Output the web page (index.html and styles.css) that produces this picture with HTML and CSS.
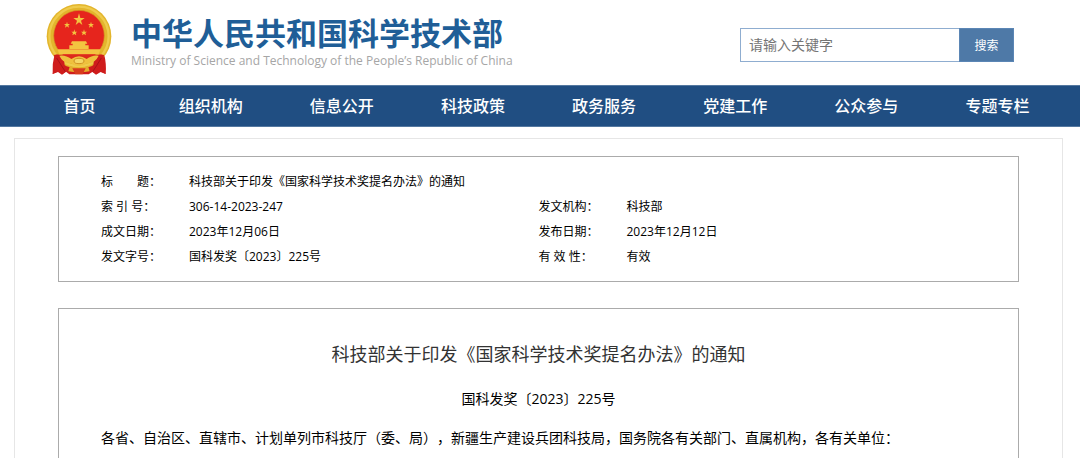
FILE: index.html
```html
<!DOCTYPE html>
<html lang="zh-CN">
<head>
<meta charset="utf-8">
<meta name="viewport" content="width=device-width, initial-scale=1">
<title>科技部关于印发《国家科学技术奖提名办法》的通知</title>
<link rel="stylesheet" href="styles.css">
</head>
<body>
<header class="header">
  <a class="brand" href="#">
    <svg class="emblem" viewBox="18 11 201 219" aria-hidden="true">
      <path d="M44 160 Q36 190 38 221 L54 215 L66 223 L78 214 L88 222 L146 222 L158 214 L168 223 L182 215 L197 221 Q200 190 192 160Z" fill="#cf1c1c"/>
      <circle cx="117" cy="108" r="97" fill="#e3b52c"/>
      <circle cx="117" cy="108" r="89" fill="none" stroke="#efcb4c" stroke-width="7"/>
      <circle cx="117" cy="106" r="76" fill="#e6251d" stroke="#d19b22" stroke-width="2"/>
      <g fill="#f3c440">
        <path d="M117 39 L121 53 L134 53 L123 61 L127 74 L117 66 L107 74 L111 61 L100 53 L113 53Z"/>
        <path d="M81 64 L83 71 L90 71 L85 75 L87 82 L81 78 L75 82 L77 75 L72 71 L79 71Z"/>
        <path d="M153 64 L155 71 L162 71 L157 75 L159 82 L153 78 L147 82 L149 75 L144 71 L151 71Z"/>
        <path d="M103 87 L105 94 L112 94 L107 98 L109 105 L103 101 L97 105 L99 98 L94 94 L101 94Z"/>
        <path d="M132 87 L134 94 L141 94 L136 98 L138 105 L132 101 L126 105 L128 98 L123 94 L130 94Z"/>
        <path d="M96 123 H138 L142 130 H136 V135 H146 V146 H88 V135 H98 V130 H92Z"/>
        <path d="M52 147 H182 L176 162 H58Z"/>
      </g>
      <path d="M47 163 H187 L174 177 H60Z" fill="#dc2a1c"/>
      <path d="M42 164 Q60 158 72 176 L76 216 L66 222 L55 213 L38 221 Q46 190 42 164Z M192 164 Q174 158 162 176 L158 216 L168 222 L180 213 L197 221 Q188 190 192 164Z" fill="#cf1c1c"/>
      <path d="M50 173 Q66 199 76 214 M184 173 Q168 199 158 214" fill="none" stroke="#a91018" stroke-width="3"/>
      <path d="M58 166 Q77 163 94 176 Q106 168 117 168 Q128 168 140 176 Q157 163 176 166 Q165 190 141 188 Q132 197 117 197 Q102 197 93 188 Q69 190 58 166Z" fill="#efc13e"/>
      <ellipse cx="117" cy="182" rx="15" ry="8" fill="#f6d766" stroke="#cf9122" stroke-width="3"/>
      <path d="M90 196 Q117 210 144 196 L149 213 Q117 219 85 213Z" fill="#e3ad2c"/>
      <path d="M97 204 L106 222 H128 L137 204Z" fill="#d83c1d"/>
    </svg>
    <span class="brand-text">
      <span class="brand-cn">中华人民共和国科学技术部</span>
      <span class="brand-en" lang="en">Ministry of Science and Technology of the People’s Republic of China</span>
    </span>
  </a>
  <form class="search" role="search">
    <input class="search-input" type="text" placeholder="请输入关键字" aria-label="请输入关键字">
    <button class="search-button" type="button">搜索</button>
  </form>
</header>
<nav class="nav">
  <a href="#">首页</a>
  <a href="#">组织机构</a>
  <a href="#">信息公开</a>
  <a href="#">科技政策</a>
  <a href="#">政务服务</a>
  <a href="#">党建工作</a>
  <a href="#">公众参与</a>
  <a href="#">专题专栏</a>
</nav>
<main class="page">
  <section class="panel info">
    <table class="info-table">
      <colgroup><col class="col-label"><col><col class="col-label"><col></colgroup>
      <tbody>
        <tr><th scope="row">标　　题：</th><td colspan="3">科技部关于印发《国家科学技术奖提名办法》的通知</td></tr>
        <tr><th scope="row">索 引 号：</th><td>306-14-2023-247</td><th scope="row">发文机构：</th><td>科技部</td></tr>
        <tr><th scope="row">成文日期：</th><td>2023年12月06日</td><th scope="row">发布日期：</th><td>2023年12月12日</td></tr>
        <tr><th scope="row">发文字号：</th><td>国科发奖〔2023〕225号</td><th scope="row">有 效 性：</th><td>有效</td></tr>
      </tbody>
    </table>
  </section>
  <article class="panel article">
    <h1 class="article-title">科技部关于印发《国家科学技术奖提名办法》的通知</h1>
    <p class="article-number">国科发奖〔2023〕225号</p>
    <p class="article-text">各省、自治区、直辖市、计划单列市科技厅（委、局），新疆生产建设兵团科技局，国务院各有关部门、直属机构，各有关单位：</p>
  </article>
</main>
</body>
</html>
```
FILE: styles.css
```css
* {
  box-sizing: border-box;
}

body {
  margin: 0;
  background: #fff;
  color: #000;
  font-family: "Open Sans", "Noto Sans CJK SC", sans-serif;
  font-size: 14px;
  text-spacing-trim: space-all;
}

a {
  color: inherit;
  text-decoration: none;
}

.header {
  display: flex;
  align-items: center;
  justify-content: space-between;
  padding: 4px 66px 8px 46px;
}

.brand {
  display: flex;
  align-items: center;
  gap: 18px;
}

.emblem {
  width: 67px;
  height: 73px;
}

.brand-text {
  display: flex;
  flex-direction: column;
  padding-top: 4px;
  white-space: nowrap;
}

.brand-cn {
  color: #205e97;
  font-family: "Liberation Sans", "Noto Sans CJK SC", sans-serif;
  font-size: 31px;
  font-weight: 700;
  line-height: 36px;
}

.brand-en {
  color: #a6a6a6;
  font-family: "Open Sans", sans-serif;
  font-size: 12px;
  line-height: 16px;
}

.search {
  display: flex;
  height: 34px;
  margin-top: 8px;
}

.search-input {
  width: 219px;
  padding: 0 8px;
  border: 1px solid #8fadd0;
  border-right: 0;
  border-radius: 0;
  background: #fff;
  font: inherit;
}

.search-input::placeholder {
  color: #757575;
  opacity: 1;
}

.search-button {
  width: 55px;
  padding: 0;
  border: 1px solid #5b86b5;
  background: #4e79a7;
  color: #fff;
  font: inherit;
  font-size: 12px;
}

.nav {
  display: grid;
  grid-template-columns: repeat(8, 1fr);
  padding: 0 17px 0 14px;
  border-top: 1px solid #5478a0;
  border-bottom: 1px solid #5478a0;
  background: #204e82;
  color: #fff;
  font-size: 16px;
  font-weight: 500;
  line-height: 40px;
  text-align: center;
}

.page {
  margin: 11px 17px 0 14px;
  padding: 17px 43px 0;
  border: 1px solid #e6e6e6;
  border-bottom: 0;
}

.panel {
  border: 1px solid #ababab;
}

.info {
  padding: 12px 42px;
}

.info-table {
  width: 100%;
  border-collapse: collapse;
  table-layout: fixed;
  font-size: 12px;
  line-height: 25px;
}

.info-table th,
.info-table td {
  padding: 0;
  font-weight: 400;
  text-align: left;
}

.col-label {
  width: 88px;
}

.article {
  margin-top: 26px;
  padding: 30px 42px 8px;
  border-bottom: 0;
}

.article-title {
  margin: 0;
  color: #333;
  font-size: 18px;
  font-weight: 400;
  line-height: 30px;
  text-align: center;
}

.article-number {
  margin: 18px 0 0;
  line-height: 24px;
  text-align: center;
}

.article-text {
  margin: 15px 0 0;
  line-height: 24px;
}
```
